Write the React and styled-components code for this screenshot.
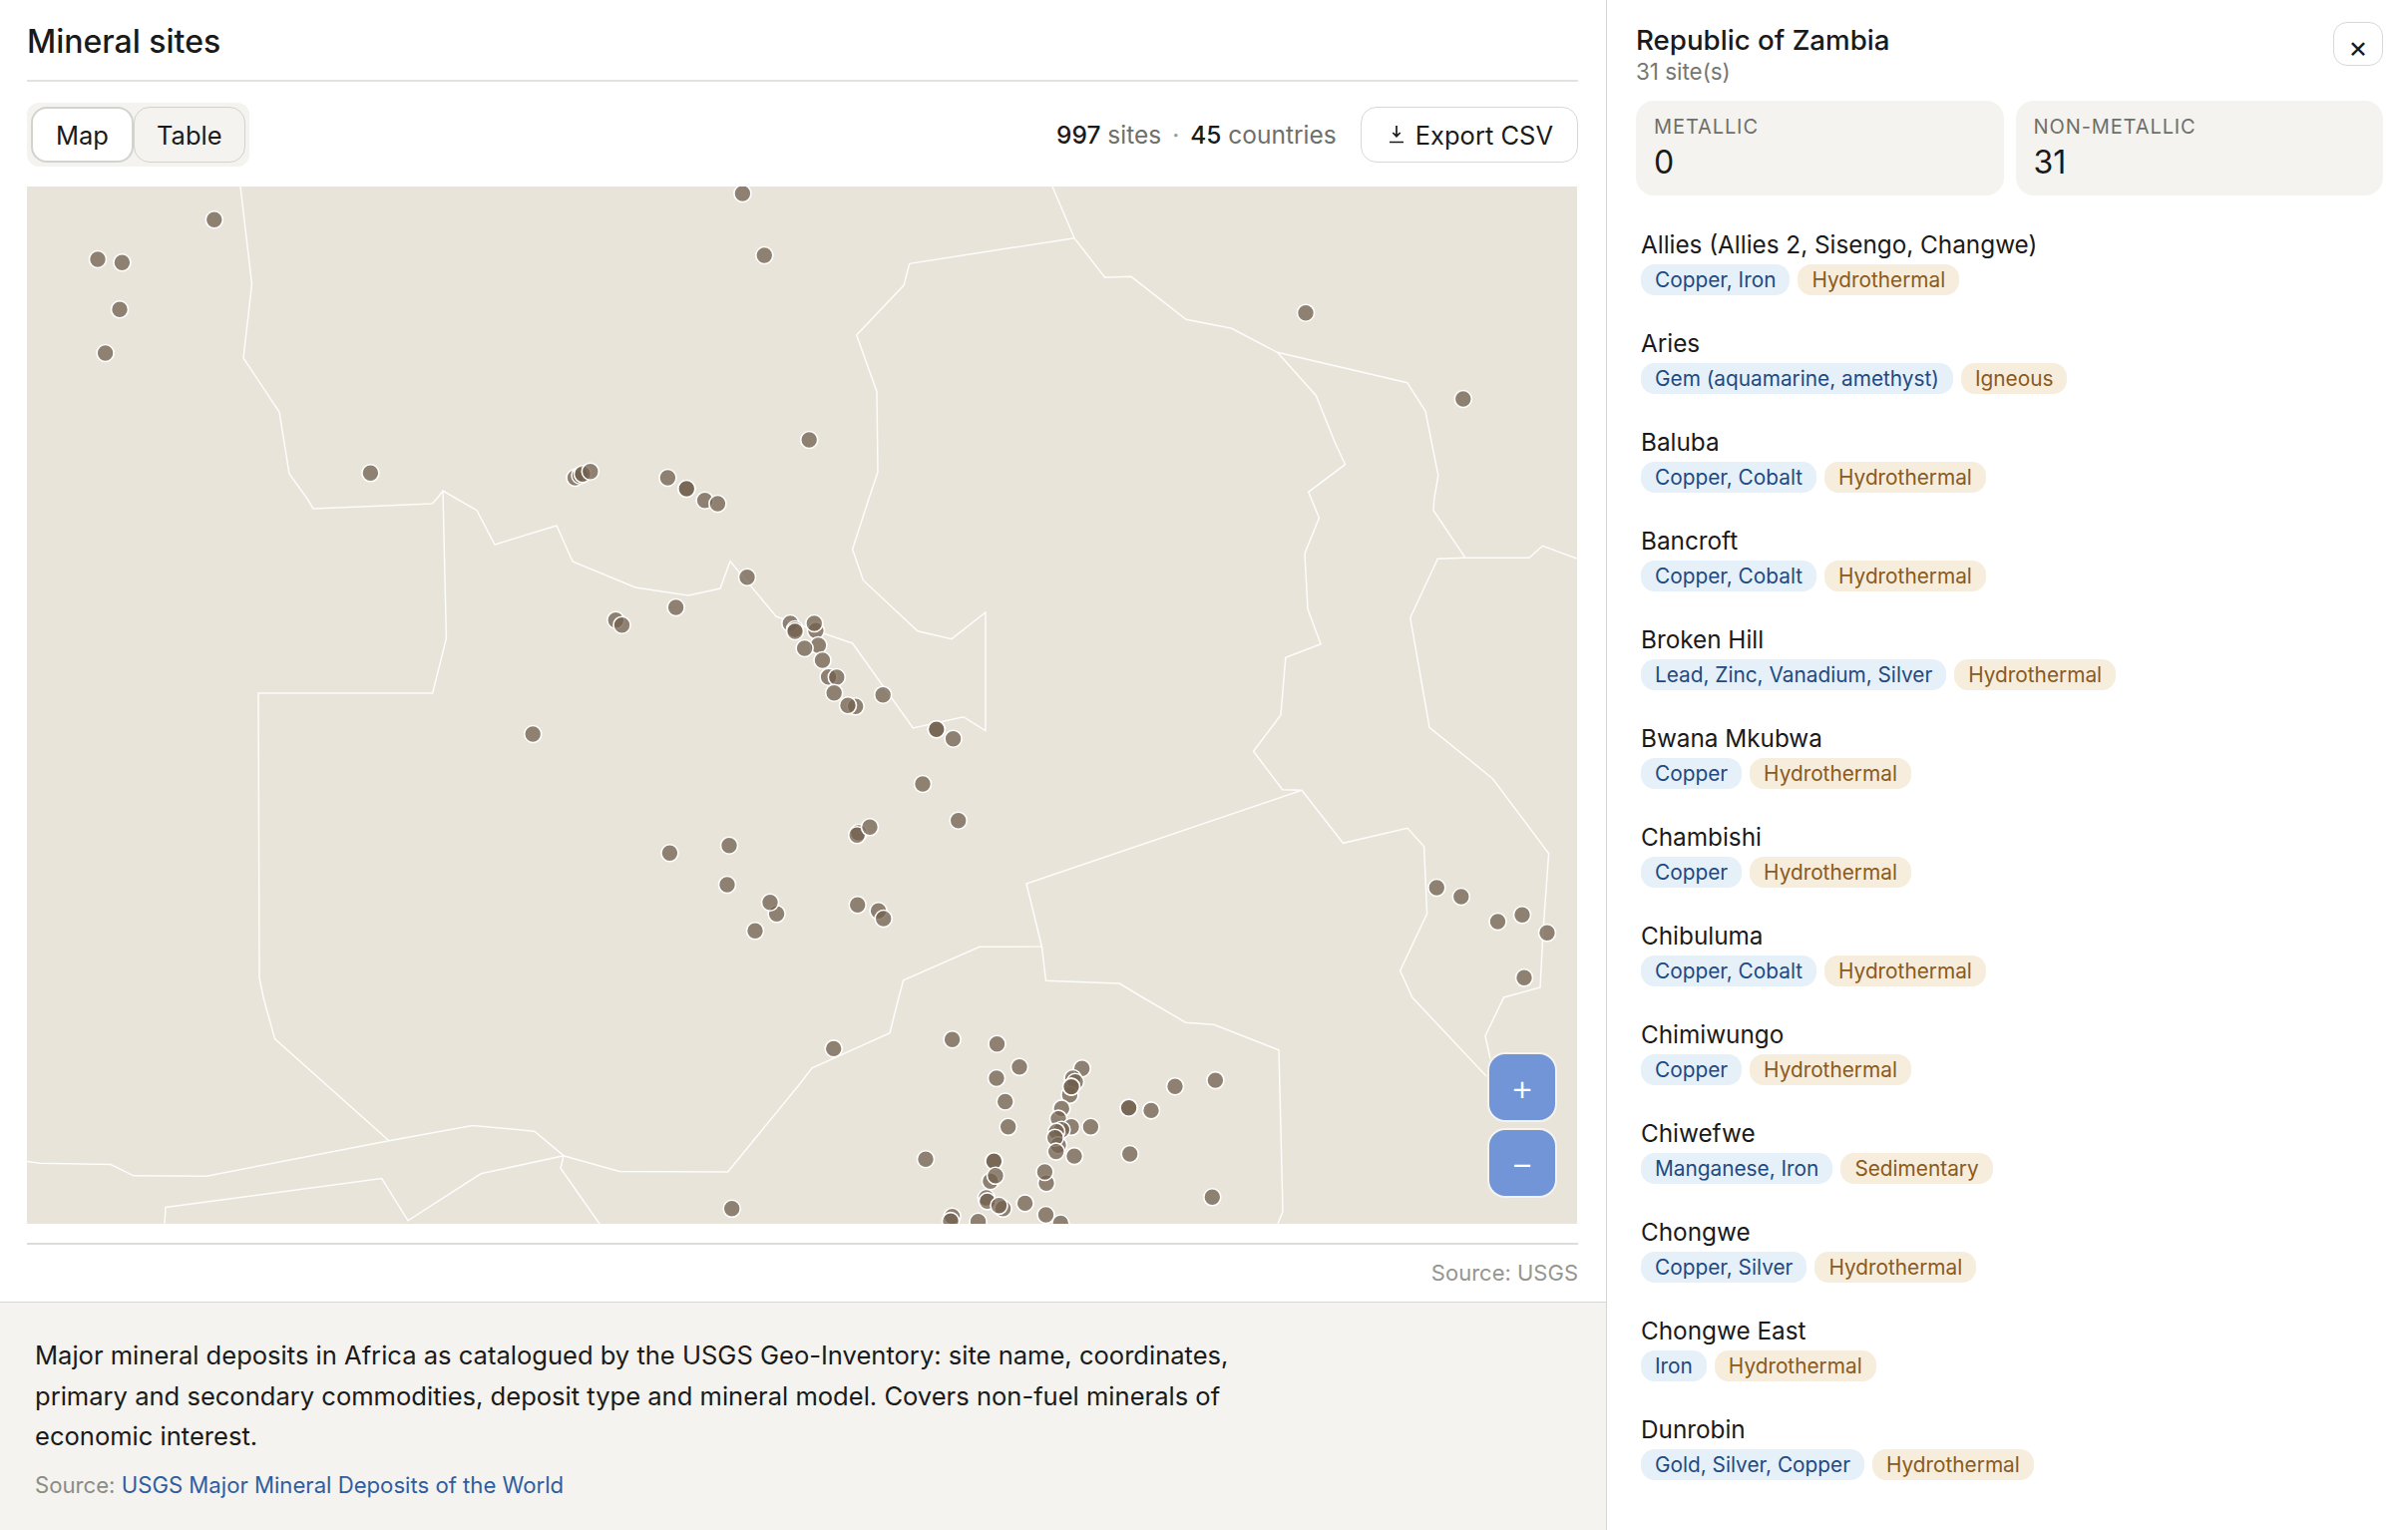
import styled, { createGlobalStyle } from "styled-components";

const GlobalStyle = createGlobalStyle`
  html, body {
    margin: 0;
    padding: 0;
    background: #fff;
    font-family: "Inter", "Liberation Sans", sans-serif;
    color: #1a1a1a;
  }
  * { box-sizing: border-box; }
`;

const Page = styled.div`
  display: flex;
  width: 2414px;
  height: 1534px;
  overflow: hidden;
`;

const Main = styled.main`
  width: 1610px;
  display: flex;
  flex-direction: column;
`;

const Panel = styled.section`
  height: 1306px;
  padding: 0 28px 0 27px;
  border-bottom: 1px solid #d6d6d2;
`;

const Title = styled.h1`
  margin: 0;
  height: 82px;
  padding-top: 21px;
  font-size: 32px;
  line-height: 42px;
  font-weight: 500;
  border-bottom: 2px solid #e2e2df;
`;

const Toolbar = styled.div`
  display: flex;
  align-items: center;
  justify-content: space-between;
  height: 105px;
  padding-top: 1px;
`;

const Segmented = styled.div`
  display: flex;
  padding: 4px;
  background: #f4f3ef;
  border-radius: 12px;
`;

const SegButton = styled.button`
  height: 56px;
  padding: 0 ${(p) => (p.$active ? "23px" : "22px")};
  font: 400 25.5px "Inter", sans-serif;
  color: #1a1a1a;
  background: ${(p) => (p.$active ? "#fff" : "#f4f3ef")};
  border: ${(p) => (p.$active ? "2px solid #d3d3ce" : "1px solid #d3d3ce")};
  border-radius: 16px;
`;

const ToolRight = styled.div`
  display: flex;
  align-items: center;
  gap: 24px;
`;

const Stats = styled.div`
  font-size: 24.5px;
  color: #6f6f6a;
  strong { font-weight: 500; color: #1a1a1a; }
`;

const Dot = styled.span`
  margin: 0 11px;
  color: #9a9a95;
`;

const ExportButton = styled.button`
  display: flex;
  align-items: center;
  gap: 12px;
  height: 56px;
  padding: 0 24px 0 28px;
  font: 400 25.5px "Inter", sans-serif;
  color: #1a1a1a;
  background: #fff;
  border: 1px solid #d8d8d4;
  border-radius: 16px;
`;

const MapBox = styled.div`
  position: relative;
  width: 1554px;
  height: 1040px;
  background: #e8e4da;
  overflow: hidden;
`;

const MapSvg = styled.svg`
  display: block;
  width: 100%;
  height: 100%;
`;

const ZoomStack = styled.div`
  position: absolute;
  right: 20px;
  bottom: 26px;
  display: flex;
  flex-direction: column;
  gap: 6px;
`;

const ZoomButton = styled.button`
  width: 70px;
  height: 70px;
  padding: 0;
  font: 300 36px "Inter", sans-serif;
  color: #fff;
  background: #7295d8;
  border: 2px solid #f4f3ef;
  border-radius: 18px;
`;

const SourceNote = styled.div`
  margin-top: 19px;
  padding-top: 13px;
  border-top: 2px solid #dcdcd9;
  font-size: 22px;
  line-height: 30px;
  text-align: right;
  color: #96968f;
`;

const Description = styled.section`
  flex: 1;
  padding: 33px 35px 0;
  background: #f4f3ef;
`;

const DescText = styled.p`
  margin: 0;
  max-width: 1220px;
  font-size: 25.55px;
  line-height: 40.5px;
`;

const DescSource = styled.p`
  margin: 12px 0 0;
  font-size: 22.15px;
  line-height: 32px;
  color: #8c8c86;
  a { color: #2f5da0; text-decoration: none; }
`;

const Aside = styled.aside`
  position: relative;
  width: 804px;
  padding: 0 25px 0 29px;
  background: #fff;
  border-left: 1px solid #d6d6d2;
`;

const AsideHead = styled.header`
  display: flex;
  justify-content: space-between;
  align-items: flex-start;
  height: 101px;
  padding-top: 22px;
`;

const Country = styled.h2`
  margin: 0;
  font-size: 27.7px;
  line-height: 36px;
  font-weight: 500;
`;

const SiteCount = styled.div`
  font-size: 22.4px;
  line-height: 28px;
  color: #777772;
`;

const CloseButton = styled.button`
  width: 50px;
  height: 44px;
  padding: 5px 0 0;
  font: 400 30px/1 "Inter", sans-serif;
  color: #1a1a1a;
  background: #fff;
  border: 1px solid #d8d8d4;
  border-radius: 14px;
`;

const StatGrid = styled.div`
  display: grid;
  grid-template-columns: 1fr 1fr;
  gap: 12px;
  height: 93px;
`;

const StatCard = styled.div`
  padding: 14px 18px;
  background: #f4f3ef;
  border-radius: 18px;
`;

const StatLabel = styled.div`
  font-size: 20px;
  line-height: 24px;
  letter-spacing: 0.9px;
  color: #6f6f6a;
`;

const StatValue = styled.div`
  margin-top: 5px;
  font-size: 32px;
  line-height: 38px;
  font-weight: 400;
`;

const SiteList = styled.ul`
  list-style: none;
  margin: 0;
  padding: 34px 0 0 5px;
`;

const SiteRow = styled.li`
  height: 99px;
`;

const SiteName = styled.div`
  font-size: 24.3px;
  line-height: 35px;
  margin-bottom: 2px;
`;

const Tags = styled.div`
  display: flex;
  gap: 8px;
`;

const Tag = styled.span`
  height: 31px;
  padding: 0 14px;
  font-size: 20.8px;
  line-height: 32px;
  border-radius: 14px;
  color: ${(p) => (p.$kind === "type" ? "#8a5a20" : "#1e4a82")};
  background: ${(p) => (p.$kind === "type" ? "#f6eddd" : "#e6f0f9")};
`;

const SITES = [
  ["Allies (Allies 2, Sisengo, Changwe)", "Copper, Iron", "Hydrothermal"],
  ["Aries", "Gem (aquamarine, amethyst)", "Igneous"],
  ["Baluba", "Copper, Cobalt", "Hydrothermal"],
  ["Bancroft", "Copper, Cobalt", "Hydrothermal"],
  ["Broken Hill", "Lead, Zinc, Vanadium, Silver", "Hydrothermal"],
  ["Bwana Mkubwa", "Copper", "Hydrothermal"],
  ["Chambishi", "Copper", "Hydrothermal"],
  ["Chibuluma", "Copper, Cobalt", "Hydrothermal"],
  ["Chimiwungo", "Copper", "Hydrothermal"],
  ["Chiwefwe", "Manganese, Iron", "Sedimentary"],
  ["Chongwe", "Copper, Silver", "Hydrothermal"],
  ["Chongwe East", "Iron", "Hydrothermal"],
  ["Dunrobin", "Gold, Silver, Copper", "Hydrothermal"],
];

// country borders, in page coordinates
const BORDERS = [
  "241,187 252.5,285 244,359 280,413 290,475 308,500 314,510 433,505 438,500 444,492 457.6,500 478,511.7 496,546 558,527 574,563 637,589 690,597 722,590 732,562.7 778,618 825.5,635 854.6,645 915.3,730 965.8,718.7 988,732.7 988,614 954,640.7 920,632.7 865.3,581.7 854.6,550.7 871,500 880,473.3 879,392.7 858.7,336 906,286 911.7,264.3 1077,238.7",
  "444,492 447.4,640 433.7,695 259,695 260,980 264,1000 275.5,1041.6 390,1143.7",
  "27,1164.5 40,1166.2 111,1167.6 134,1178.8 207,1179.2 390,1143.7 473.5,1128.4 535.7,1134.2 565,1158.7 621,1174.4 729.6,1175 800,1089 814,1070.8 892,1035.8 901,1000 905.6,982.7 982,949.3 1044.4,949 1029,886 1305,792.3 1285.7,791.7 1256.6,753.3 1284,716.7 1288.8,659.3 1324,645.7 1311,610.7 1308,555 1322.4,519.3 1311.7,493.3 1348.5,465.7 1338,443 1319.4,396.7 1280.6,353.3",
  "165,1227 166,1210.5 382.7,1181.5 409,1223.8 482,1176.8 565,1158.7 562,1171.3 601,1227",
  "1055,187 1077,238.7 1107.7,278.3 1134,277.3 1189,320.3 1234.7,329.3 1280.6,353.3 1410.7,383.7 1429,412.3 1441.8,476.7 1437.8,500 1437,511.7 1469,559.3 1533,559.3 1546.4,547.3 1581,560",
  "1469,559.3 1441.3,560.3 1413.8,619.3 1433,729.3 1496.4,780.7 1552.6,855.7 1547,933 1544,990 1507.6,1000 1489,1038.5 1494,1061.3",
  "1305,792.3 1346.4,845.3 1411,830.3 1427.6,848.7 1430.6,916 1403.6,973.3 1415.8,1000 1490,1079",
  "1044.4,949 1048.5,983.3 1122.4,986 1145.4,1000 1188.8,1025.2 1216.8,1027.2 1282,1052.8 1286,1214.6 1281,1227",
];

const MARKERS = [
  [744.4, 194], [214.8, 220.3], [766.3, 256], [98, 260], [122.4, 263.3], [120, 310.3], [1309, 313.7], [105.6, 354],
  [1466.8, 400], [811.2, 441], [371.4, 474.3], [576.5, 479], [581.6, 476.7], [584, 475.3], [591.8, 472.7], [669.4, 479],
  [688.3, 490], [688.3, 490], [706.6, 501.7], [719.4, 505], [749, 578.7], [677.6, 609], [617.3, 621.7], [623.5, 626.7],
  [792.3, 625], [797, 631], [797, 633], [817.9, 632.3], [816.3, 625], [820.4, 647], [806.6, 650], [824.5, 662],
  [830.6, 678.7], [838.8, 679], [836.2, 694.7], [857.7, 708.3], [850, 707.3], [885.2, 696.7], [938.8, 731.3], [938.8, 731.3],
  [955.6, 740.7], [925, 786], [534.2, 736], [960.7, 822.7], [860.7, 835], [859.2, 837.3], [872, 829.3], [731, 847.7],
  [671.4, 855.3], [729, 887], [859.7, 907.3], [778.6, 916.3], [772, 904.7], [880.6, 913.3], [885.7, 921], [757, 933.3],
  [1440.3, 890], [1464.8, 899], [1501.5, 924], [1526, 917.3], [1551, 935.3], [1528, 980.3],
  [835.7, 1051.4], [954.6, 1042.2], [999.5, 1046.7], [1022, 1069.8], [1084.7, 1071.2], [1075.5, 1081], [1078, 1084.8],
  [1072.4, 1097.8], [1074, 1089.6], [1074, 1089.6], [999, 1081], [1007.7, 1104.5], [1010.7, 1129.8], [1064.3, 1111.4],
  [1061, 1121.6], [1074, 1129.8], [1093.4, 1129.8], [1131.6, 1110.7], [1131.6, 1110.7], [1154, 1113.4], [1178, 1089.2], [1218.4, 1083.1],
  [1064.3, 1132.8], [1059, 1134.6], [1061, 1148.2], [1057.7, 1140.7], [1058.7, 1154.6], [1077, 1159.1], [1132.7, 1157],
  [928, 1162.2], [996.4, 1164.2], [996.4, 1164.2], [992.9, 1184.2], [998, 1178.8], [1049, 1186.3], [1047.4, 1175],
  [988.8, 1201], [989.8, 1204.4], [1005.6, 1211.8], [1001.5, 1208.8], [1027.6, 1206.4], [1048.5, 1218], [1063.3, 1226.5],
  [954.6, 1219.7], [953, 1224.1], [980.6, 1224.8], [1215.3, 1200.3], [733.7, 1211.8],
];

const DownloadIcon = () => (
  <svg width="14" height="18" viewBox="0 0 14 18" fill="none" stroke="#1a1a1a" strokeWidth="1.7">
    <path d="M7 0v10.5M3.3 7L7 10.7 10.7 7M0 16.5h14" />
  </svg>
);

export default function App() {
  return (
    <Page>
      <GlobalStyle />
      <Main>
        <Panel>
          <Title>Mineral sites</Title>
          <Toolbar>
            <Segmented>
              <SegButton $active>Map</SegButton>
              <SegButton>Table</SegButton>
            </Segmented>
            <ToolRight>
              <Stats>
                <strong>997</strong> sites<Dot>·</Dot>
                <strong>45</strong> countries
              </Stats>
              <ExportButton>
                <DownloadIcon />
                Export CSV
              </ExportButton>
            </ToolRight>
          </Toolbar>
          <MapBox>
            <MapSvg viewBox="27 187 1554 1040">
              {BORDERS.map((points) => (
                <polyline key={points} points={points} fill="none" stroke="#fff" strokeWidth="1.5" opacity="0.9" />
              ))}
              {MARKERS.map(([x, y], i) => (
                <circle key={i} cx={x} cy={y} r="8.5" fill="#72604e" fillOpacity="0.75" stroke="#fff" strokeWidth="1.6" />
              ))}
            </MapSvg>
            <ZoomStack>
              <ZoomButton>+</ZoomButton>
              <ZoomButton>−</ZoomButton>
            </ZoomStack>
          </MapBox>
          <SourceNote>Source: USGS</SourceNote>
        </Panel>
        <Description>
          <DescText>
            Major mineral deposits in Africa as catalogued by the USGS Geo-Inventory: site name, coordinates, primary
            and secondary commodities, deposit type and mineral model. Covers non-fuel minerals of economic interest.
          </DescText>
          <DescSource>
            Source: <a href="#usgs">USGS Major Mineral Deposits of the World</a>
          </DescSource>
        </Description>
      </Main>
      <Aside>
        <AsideHead>
          <div>
            <Country>Republic of Zambia</Country>
            <SiteCount>31 site(s)</SiteCount>
          </div>
          <CloseButton>×</CloseButton>
        </AsideHead>
        <StatGrid>
          <StatCard>
            <StatLabel>METALLIC</StatLabel>
            <StatValue>0</StatValue>
          </StatCard>
          <StatCard>
            <StatLabel>NON-METALLIC</StatLabel>
            <StatValue>31</StatValue>
          </StatCard>
        </StatGrid>
        <SiteList>
          {SITES.map(([name, commodity, type]) => (
            <SiteRow key={name}>
              <SiteName>{name}</SiteName>
              <Tags>
                <Tag>{commodity}</Tag>
                <Tag $kind="type">{type}</Tag>
              </Tags>
            </SiteRow>
          ))}
        </SiteList>
      </Aside>
    </Page>
  );
}
